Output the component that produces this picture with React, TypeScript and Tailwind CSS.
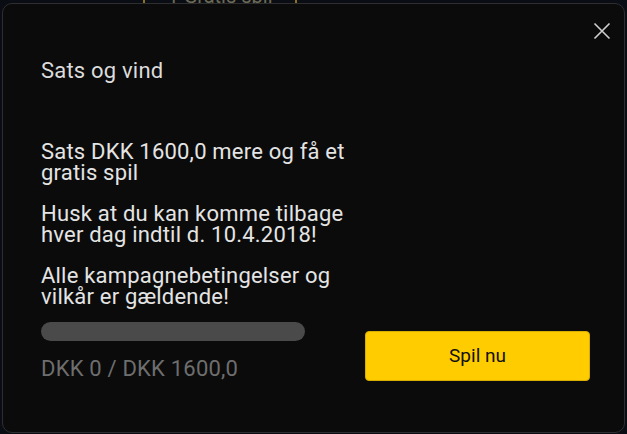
const paragraphs = [
  'Sats DKK 1600,0 mere og få et gratis spil',
  'Husk at du kan komme tilbage hver dag indtil d. 10.4.2018!',
  'Alle kampagnebetingelser og vilkår er gældende!',
];

export default function App() {
  return (
    <div className="relative w-[627px] h-[434px] overflow-hidden bg-[#0a0d14] font-['Roboto','Liberation_Sans',sans-serif]">
      {/* page behind the dialog */}
      <div className="absolute left-[143px] top-[-14px] w-[154px] h-[20px] border-x-2 border-[#8a7420] flex justify-center">
        <span className="text-[20px] leading-[20px] text-[#6d6a55]">1 Gratis spil</span>
      </div>

      {/* dialog */}
      <div className="absolute left-[2px] top-[3px] right-[2px] bottom-[1px] rounded-[10px] border border-[#2e2e30] bg-[#0b0b0b]">
        <button className="absolute left-[590px] top-[18px] text-[#cfcfcf]">
          <svg width="18" height="18" viewBox="0 0 18 18" fill="none" stroke="currentColor" strokeWidth="1.6">
            <path d="M1.5 1.5L16.5 16.5M16.5 1.5L1.5 16.5" />
          </svg>
        </button>

        <div className="flex flex-col pl-[38px] pt-[55px]">
          <h2 className="text-[22px] leading-[24px] tracking-[0.2px] font-normal text-[#dcdcdc]">Sats og vind</h2>

          <div className="mt-[58px] w-[320px] flex flex-col gap-[20px]">
            {paragraphs.map((p, i) => (
              <p key={i} className="text-[22px] leading-[21px] tracking-[0.2px] text-[#e4e4e4]">
                {p}
              </p>
            ))}
          </div>

          <div className="mt-[15px] flex items-start">
            <div className="w-[264px] flex flex-col">
              <div className="h-[19px] rounded-full bg-[#4a4a4a]" />
              <span className="mt-[17px] text-[22px] leading-[22px] tracking-[0.2px] text-[#6e6e6e]">DKK 0 / DKK 1600,0</span>
            </div>
            <button className="ml-[60px] mt-[9px] w-[225px] h-[50px] rounded-[4px] border border-[#d9ae00] bg-[#ffcc00] text-[19px] text-[#111]">
              Spil nu
            </button>
          </div>
        </div>
      </div>
    </div>
  );
}
